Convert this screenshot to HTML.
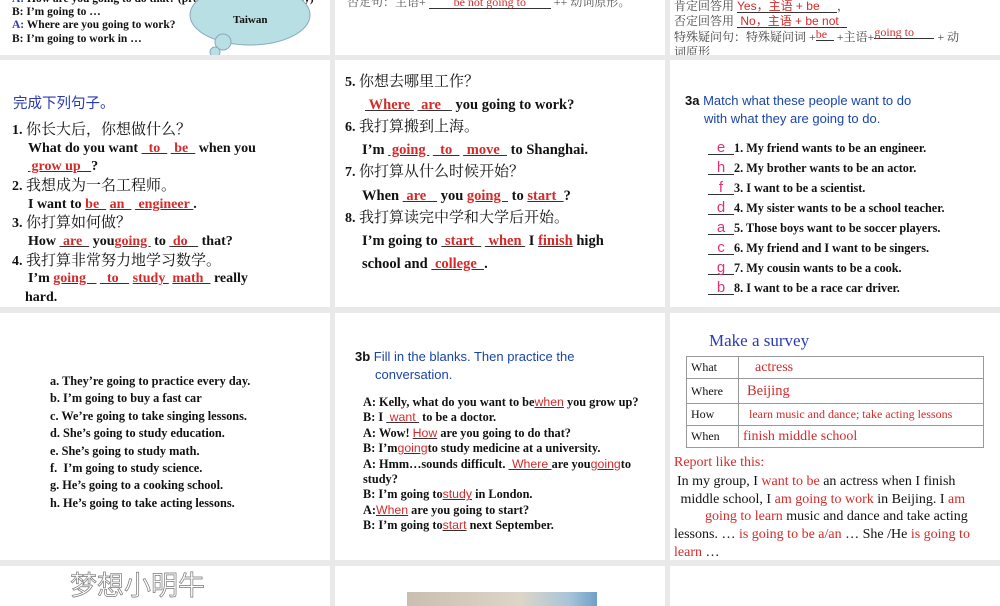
<!DOCTYPE html>
<html><head><meta charset="utf-8"><style>
*{margin:0;padding:0;box-sizing:border-box}
body{width:1000px;height:600px;background:#e9e9e9;position:relative;overflow:hidden;font-family:"Liberation Serif","Noto Serif CJK SC",serif;color:#111}
.c{position:absolute;background:#fff;overflow:hidden}
.l{position:absolute;white-space:nowrap;line-height:1}
.s{font-family:"Liberation Sans","Noto Sans CJK SC",sans-serif}
.cn{font-family:"Liberation Serif","Noto Serif CJK SC",serif;font-weight:normal}
.r{color:#d42a2a}
.u{color:#d42a2a;text-decoration:underline;text-decoration-color:#333}
.b{font-weight:bold}
.bl{color:#2a3bb5}
.ab{color:#1a45a8}
.m{color:#e0307a;font-family:"Liberation Sans",sans-serif;font-weight:normal;font-size:15px;display:inline-block;width:26px;border-bottom:1px solid #333;text-align:center;line-height:13px}
table{border-collapse:collapse}
td{border:1px solid #999;font-size:12px;padding:0 4px;height:22px}
</style></head><body>
<!-- row1 -->
<div class="c" style="left:0;top:0;width:330px;height:55px">
 <div class="l b" style="left:12px;top:-6px;font-size:11.5px"><span class="bl">A:</span> How are you going to do that? (practice singing every day)</div>
 <div class="l b" style="left:12px;top:7px;font-size:11.5px">B: I’m going to …</div>
 <div class="l b" style="left:12px;top:20px;font-size:11.5px"><span class="bl">A:</span> Where are you going to work?</div>
 <div class="l b" style="left:12px;top:34px;font-size:11.5px">B: I’m going to work in …</div>
 <svg style="position:absolute;left:185px;top:-20px" width="130" height="85"><g fill="#b8dfe3" stroke="#8ab" stroke-width="1"><ellipse cx="65" cy="35" rx="60" ry="30"/><circle cx="38" cy="62" r="8"/><circle cx="30" cy="72" r="5"/><circle cx="27" cy="79" r="3"/></g></svg>
 <div class="l b" style="left:233px;top:15px;font-size:11px">Taiwan</div>
</div>
<div class="c" style="left:335px;top:0;width:330px;height:55px">
 <div class="l cn" style="left:12px;top:-4px;font-size:12px;color:#555">否定句：主语+ <span style="display:inline-block;width:122px;border-bottom:1px solid #333;color:#d42a2a;text-align:center">be not going to</span> ++ 动词原形。</div>
</div>
<div class="c" style="left:670px;top:0;width:330px;height:55px">
 <div class="l cn" style="left:4px;top:0px;font-size:12px;color:#444">肯定回答用 <span style="display:inline-block;width:100px;border-bottom:1px solid #333;color:#d42a2a;font-family:'Liberation Sans','Noto Sans CJK SC',sans-serif">Yes，主语 + be</span>，</div>
 <div class="l cn" style="left:4px;top:15px;font-size:12px;color:#444">否定回答用 <span style="display:inline-block;width:110px;border-bottom:1px solid #333;color:#d42a2a;font-family:'Liberation Sans','Noto Sans CJK SC',sans-serif">&nbsp;No，主语 + be not</span></div>
 <div class="l cn" style="left:4px;top:31px;font-size:12px;color:#444">特殊疑问句：特殊疑问词 +<span class="r" style="display:inline-block;width:18px;border-bottom:1px solid #333;position:relative;top:-3px">be</span> +主语+<span class="r" style="display:inline-block;width:60px;border-bottom:1px solid #333;position:relative;top:-5px">going to</span> + 动</div>
 <div class="l cn" style="left:4px;top:46px;font-size:12px;color:#444">词原形</div>
</div>
<!-- row2 -->
<div class="c" style="left:0;top:60px;width:330px;height:247px">
 <div class="l s bl" style="left:13px;top:37px;font-size:14.5px">完成下列句子。</div>
 <div class="l b" style="left:12px;top:63px;font-size:14px">1. <span class="cn" style="font-size:15px">你长大后，你想做什么？</span></div>
 <div class="l b" style="left:28px;top:82px;font-size:14px">What do you want <span class="u">&nbsp;&nbsp;to&nbsp;&nbsp;</span> <span class="u">&nbsp;be&nbsp;&nbsp;</span> when you</div>
 <div class="l b" style="left:28px;top:100px;font-size:14px"><span class="u">&nbsp;grow up&nbsp;&nbsp;&nbsp;</span>?</div>
 <div class="l b" style="left:12px;top:119px;font-size:14px">2. <span class="cn" style="font-size:15px">我想成为一名工程师。</span></div>
 <div class="l b" style="left:28px;top:138px;font-size:14px">I want to <span class="u">be&nbsp;&nbsp;</span> <span class="u">an&nbsp;&nbsp;</span> <span class="u">&nbsp;engineer&nbsp;</span>.</div>
 <div class="l b" style="left:12px;top:156px;font-size:14px">3. <span class="cn" style="font-size:15px">你打算如何做？</span></div>
 <div class="l b" style="left:28px;top:175px;font-size:14px">How <span class="u">&nbsp;are&nbsp;&nbsp;</span> you<span class="u">going&nbsp;</span> to <span class="u">&nbsp;do&nbsp;&nbsp;&nbsp;</span> that?</div>
 <div class="l b" style="left:12px;top:194px;font-size:14px">4. <span class="cn" style="font-size:15px">我打算非常努力地学习数学。</span></div>
 <div class="l b" style="left:28px;top:212px;font-size:14px">I’m <span class="u">going&nbsp;&nbsp;&nbsp;</span> <span class="u">&nbsp;&nbsp;to&nbsp;&nbsp;&nbsp;</span> <span class="u">study&nbsp;</span> <span class="u">math&nbsp;&nbsp;</span> really</div>
 <div class="l b" style="left:25px;top:231px;font-size:14px">hard.</div>
</div>
<div class="c" style="left:335px;top:60px;width:330px;height:247px">
 <div class="l b" style="left:10px;top:15px;font-size:14px">5. <span class="cn" style="font-size:15px">你想去哪里工作？</span></div>
 <div class="l b" style="left:30px;top:38px;font-size:14.5px"><span class="u">&nbsp;Where&nbsp;</span> <span class="u">&nbsp;are&nbsp;&nbsp;&nbsp;</span> you going to work?</div>
 <div class="l b" style="left:10px;top:60px;font-size:14px">6. <span class="cn" style="font-size:15px">我打算搬到上海。</span></div>
 <div class="l b" style="left:27px;top:83px;font-size:14.5px">I’m <span class="u">&nbsp;going&nbsp;</span> <span class="u">&nbsp;&nbsp;to&nbsp;&nbsp;</span> <span class="u">&nbsp;move&nbsp;&nbsp;</span> to Shanghai.</div>
 <div class="l b" style="left:10px;top:105px;font-size:14px">7. <span class="cn" style="font-size:15px">你打算从什么时候开始？</span></div>
 <div class="l b" style="left:27px;top:129px;font-size:14.5px">When <span class="u">&nbsp;are&nbsp;&nbsp;&nbsp;</span> you <span class="u">going&nbsp;&nbsp;</span> to <span class="u">start&nbsp;&nbsp;</span>?</div>
 <div class="l b" style="left:10px;top:151px;font-size:14px">8. <span class="cn" style="font-size:15px">我打算读完中学和大学后开始。</span></div>
 <div class="l b" style="left:27px;top:174px;font-size:14.5px">I’m going to <span class="u">&nbsp;start&nbsp;&nbsp;</span> <span class="u">&nbsp;when&nbsp;</span> I <span class="u">finish</span> high</div>
 <div class="l b" style="left:27px;top:197px;font-size:14.5px">school and <span class="u">&nbsp;college&nbsp;&nbsp;</span>.</div>
</div>
<div class="c" style="left:670px;top:60px;width:330px;height:247px">
 <div class="l s" style="left:15px;top:34px;font-size:13px"><b>3a</b> <span class="ab">Match what these people want to do</span></div>
 <div class="l s ab" style="left:34px;top:52px;font-size:13px">with what they are going to do.</div>
 <div class="l b" style="left:38px;top:81px;font-size:12.2px"><span class="m">e</span>1. My friend wants to be an engineer.</div>
 <div class="l b" style="left:38px;top:101px;font-size:12.2px"><span class="m">h</span>2. My brother wants to be an actor.</div>
 <div class="l b" style="left:38px;top:121px;font-size:12.2px"><span class="m">f</span>3. I want to be a scientist.</div>
 <div class="l b" style="left:38px;top:141px;font-size:12.2px"><span class="m">d</span>4. My sister wants to be a school teacher.</div>
 <div class="l b" style="left:38px;top:161px;font-size:12.2px"><span class="m">a</span>5. Those boys want to be soccer players.</div>
 <div class="l b" style="left:38px;top:181px;font-size:12.2px"><span class="m">c</span>6. My friend and I want to be singers.</div>
 <div class="l b" style="left:38px;top:201px;font-size:12.2px"><span class="m">g</span>7. My cousin wants to be a cook.</div>
 <div class="l b" style="left:38px;top:221px;font-size:12.2px"><span class="m">b</span>8. I want to be a race car driver.</div>
</div>
<!-- row3 -->
<div class="c" style="left:0;top:313px;width:330px;height:247px">
 <div class="l b" style="left:50px;top:60px;font-size:12.3px;line-height:17.4px">a. They’re going to practice every day.<br>b. I’m going to buy a fast car<br>c. We’re going to take singing lessons.<br>d. She’s going to study education.<br>e. She’s going to study math.<br>f.&nbsp; I’m going to study science.<br>g. He’s going to a cooking school.<br>h. He’s going to take acting lessons.</div>
</div>
<div class="c" style="left:335px;top:313px;width:330px;height:247px">
 <div class="l s" style="left:20px;top:37px;font-size:13px"><b>3b</b> <span class="ab">Fill in the blanks. Then practice the</span></div>
 <div class="l s ab" style="left:40px;top:55px;font-size:13px">conversation.</div>
 <div class="l b" style="left:28px;top:82px;font-size:12.3px;line-height:15.4px">A: Kelly, what do you want to be<span class="u s" style="font-weight:normal">when</span> you grow up?<br>B: I <span class="u s" style="font-weight:normal">&nbsp;want&nbsp;</span> to be a doctor.<br>A: Wow! <span class="u s" style="font-weight:normal">How</span> are you going to do that?<br>B: I’m<span class="u s" style="font-weight:normal">going</span>to study medicine at a university.<br>A: Hmm…sounds difficult. <span class="u s" style="font-weight:normal">&nbsp;Where&nbsp;</span>are you<span class="u s" style="font-weight:normal">going</span>to<br>study?<br>B: I’m going to<span class="u s" style="font-weight:normal">study</span> in London.<br>A:<span class="u s" style="font-weight:normal">When</span> are you going to start?<br>B: I’m going to<span class="u s" style="font-weight:normal">start</span> next September.</div>
</div>
<div class="c" style="left:670px;top:313px;width:330px;height:247px">
 <div class="l bl" style="left:39px;top:19px;font-size:17px">Make a survey</div>
 <table style="position:absolute;left:16px;top:43px;width:298px">
  <tr><td style="width:52px">What</td><td class="r" style="font-size:14px;padding-left:16px">actress</td></tr>
  <tr><td style="height:25px">Where</td><td class="r" style="font-size:14.5px;padding-left:8px">Beijing</td></tr>
  <tr><td>How</td><td class="r" style="font-size:12px;padding-left:10px">learn music and dance; take acting lessons</td></tr>
  <tr><td>When</td><td class="r" style="font-size:14px">finish middle school</td></tr>
 </table>
 <div class="l r" style="left:4px;top:143px;font-size:14px">Report like this:</div>
 <div class="l" style="left:7px;top:160px;font-size:14px;line-height:17.5px">In my group, I <span class="r">want to be</span> an actress when I finish<br>&nbsp;middle school, I <span class="r">am going to work</span> in Beijing. I <span class="r">am</span><br>&nbsp;&nbsp;&nbsp;&nbsp;&nbsp;&nbsp;&nbsp;&nbsp;<span class="r">going to learn</span> music and dance and take acting</div>
 <div class="l" style="left:4px;top:213px;font-size:14px;line-height:17.5px">lessons. … <span class="r">is going to be a/an</span> … She /He <span class="r">is going to</span><br><span class="r">learn</span> …</div>
</div>
<!-- row4 -->
<div class="c" style="left:0;top:566px;width:330px;height:40px">
 <div class="l" style="left:70px;top:4px;font-size:27px;color:#fff;-webkit-text-stroke:0.7px #777;font-family:'Noto Sans CJK SC',sans-serif">梦想小明牛</div>
</div>
<div class="c" style="left:335px;top:566px;width:330px;height:40px">
 <div style="position:absolute;left:72px;top:26px;width:190px;height:20px;background:linear-gradient(90deg,#c9bfb0,#ddd5c8 60%,#a9c4d9 85%,#6fa0c8)"></div>
</div>
<div class="c" style="left:670px;top:566px;width:330px;height:40px"></div>
</body></html>
